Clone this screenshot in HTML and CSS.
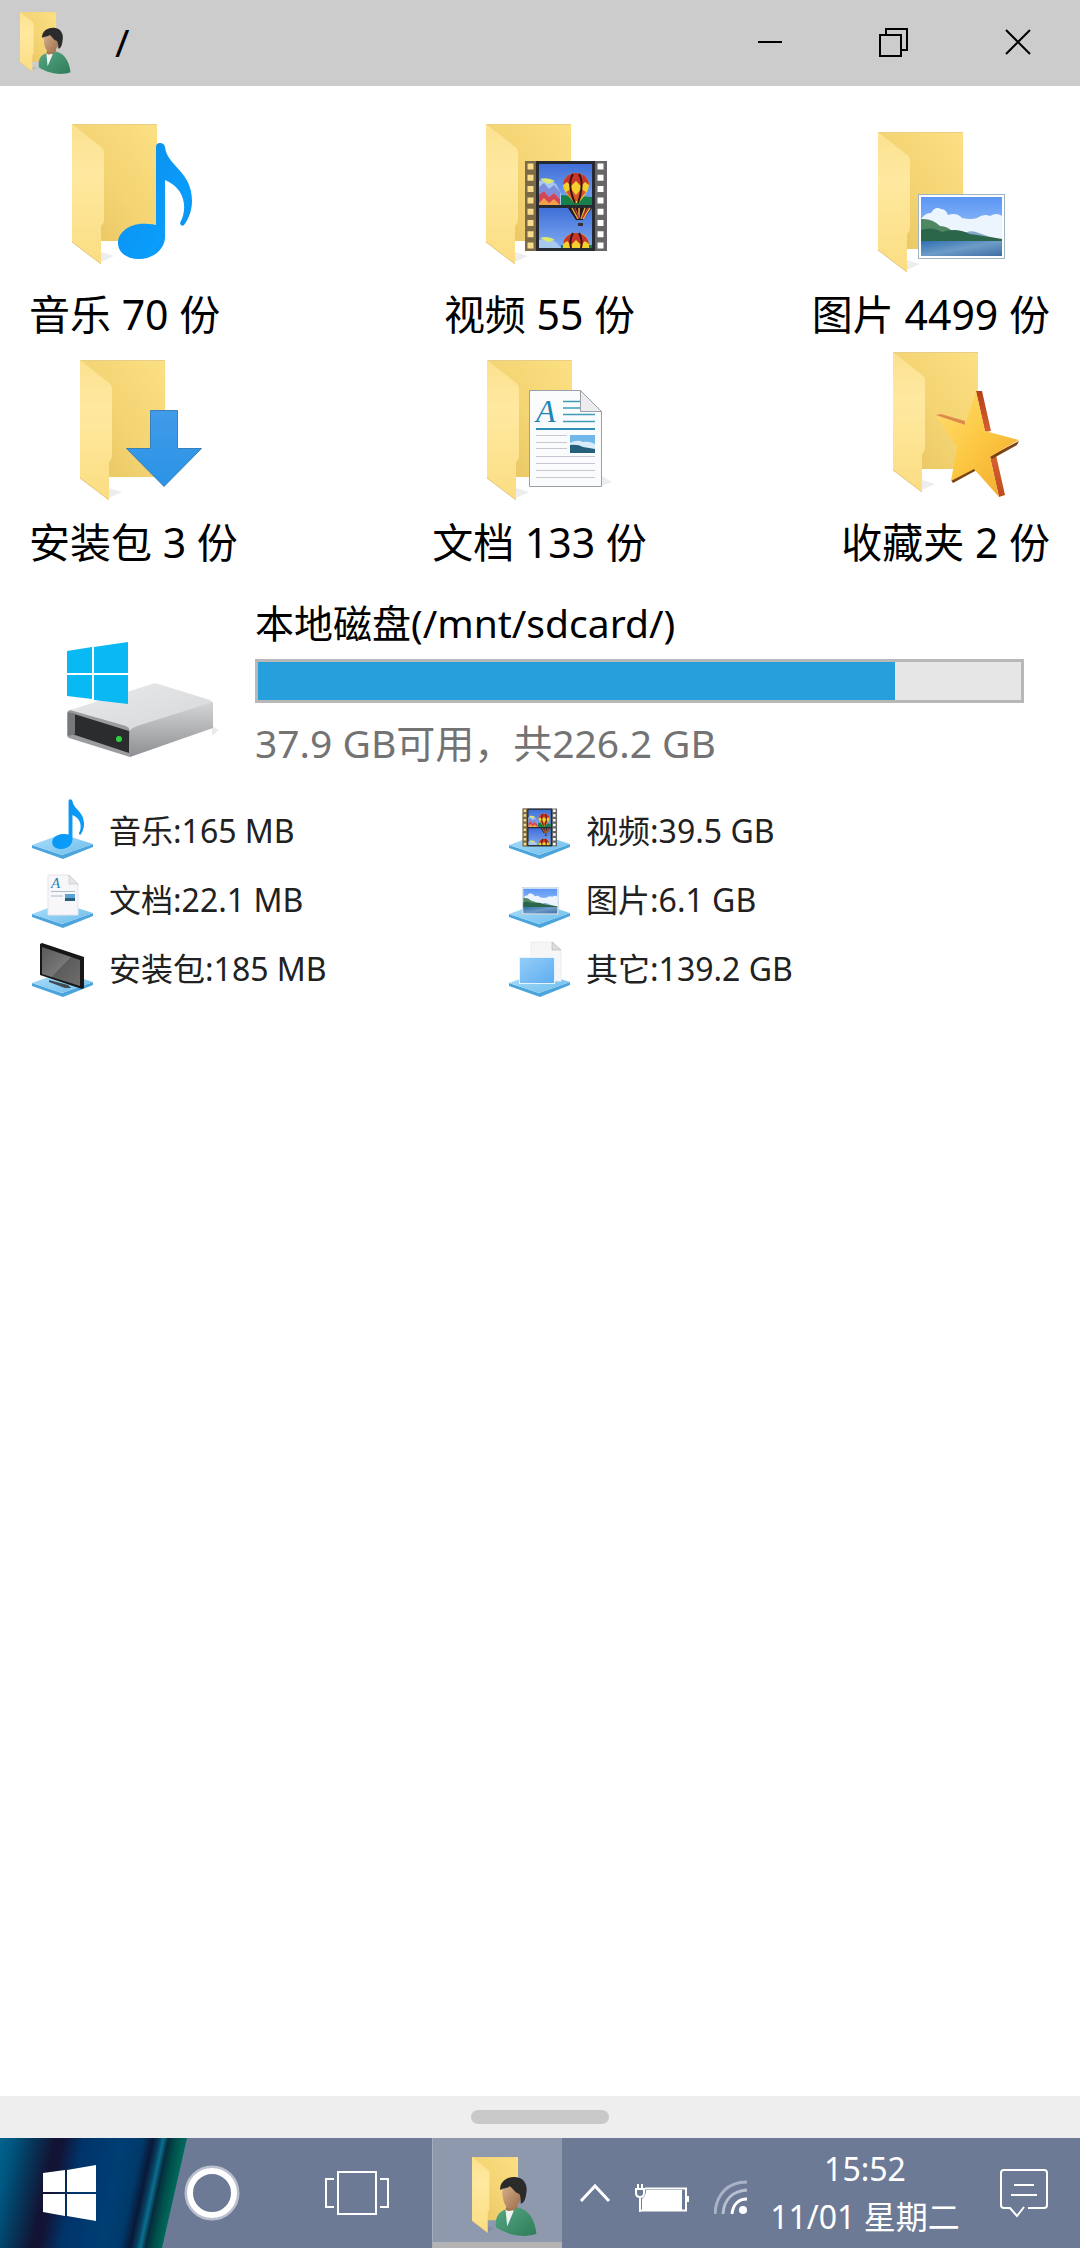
FILE: index.html
```html
<!DOCTYPE html>
<html lang="zh-CN">
<head>
<meta charset="utf-8">
<meta name="viewport" content="width=device-width, initial-scale=1">
<title>文件管理</title>
<link rel="stylesheet" href="styles.css">
</head>
<body>
<svg class="defs" aria-hidden="true">
  <defs>
    <linearGradient id="gBack" x1="0" y1="1" x2="1" y2="0"><stop offset="0" stop-color="#e7c360"/><stop offset=".5" stop-color="#f4d473"/><stop offset="1" stop-color="#fce083"/></linearGradient>
    <linearGradient id="gFlap" x1="0" y1="0" x2="0" y2="1"><stop offset="0" stop-color="#fbe190"/><stop offset=".35" stop-color="#ffe9a0"/><stop offset="1" stop-color="#fbdd82"/></linearGradient>
    <linearGradient id="gNote" x1="0" y1="0" x2="1" y2="1"><stop offset="0" stop-color="#0d8ce8"/><stop offset=".7" stop-color="#0a9dfc"/><stop offset="1" stop-color="#0b84dc"/></linearGradient>
    <linearGradient id="gSky" x1="0" y1="0" x2="0" y2="1"><stop offset="0" stop-color="#3f6fd8"/><stop offset="1" stop-color="#7fa9f2"/></linearGradient>
    <linearGradient id="gPhoto" x1="0" y1="0" x2="0" y2="1"><stop offset="0" stop-color="#5b96f4"/><stop offset="1" stop-color="#b7d8fb"/></linearGradient>
    <linearGradient id="gWater" x1="0" y1="0" x2="1" y2="1"><stop offset="0" stop-color="#2f6fb0"/><stop offset=".5" stop-color="#6d9cc8"/><stop offset="1" stop-color="#3f6fa3"/></linearGradient>
    <linearGradient id="gArrow" x1="0" y1="0" x2="0" y2="1"><stop offset="0" stop-color="#419be9"/><stop offset="1" stop-color="#2a93e6"/></linearGradient>
    <linearGradient id="gStar" x1="0" y1="0" x2="1" y2="1"><stop offset="0" stop-color="#ffe070"/><stop offset=".5" stop-color="#fcc742"/><stop offset="1" stop-color="#f0a72c"/></linearGradient>
    <linearGradient id="gRed" x1="0" y1="0" x2="0" y2="1"><stop offset="0" stop-color="#b8401a"/><stop offset=".5" stop-color="#dc6a35"/><stop offset="1" stop-color="#c04a1c"/></linearGradient>
    <linearGradient id="gTray" x1="0" y1="0" x2="1" y2="1"><stop offset="0" stop-color="#aee0fb"/><stop offset="1" stop-color="#6cbcec"/></linearGradient>
    <linearGradient id="gSide" x1="0" y1="0" x2="0" y2="1"><stop offset="0" stop-color="#d4d5d7"/><stop offset="1" stop-color="#8e8f92"/></linearGradient>
    <linearGradient id="gTop" x1="0" y1="0" x2="1" y2="1"><stop offset="0" stop-color="#e9eaeb"/><stop offset="1" stop-color="#d6d7d9"/></linearGradient>
    <linearGradient id="gCoat" x1="0" y1="0" x2="1" y2="1"><stop offset="0" stop-color="#57a684"/><stop offset="1" stop-color="#2d7d59"/></linearGradient>
    <linearGradient id="gFace" x1="0" y1="0" x2="1" y2="1"><stop offset="0" stop-color="#d8b592"/><stop offset="1" stop-color="#9c6b47"/></linearGradient>
    <linearGradient id="gTv" x1="0" y1="0" x2="1" y2="1"><stop offset="0" stop-color="#5a5a5a"/><stop offset=".5" stop-color="#777"/><stop offset=".52" stop-color="#5c5c5c"/><stop offset="1" stop-color="#6e6e6e"/></linearGradient>
    <linearGradient id="gBlue" x1="0" y1="0" x2="1" y2="1"><stop offset="0" stop-color="#94cdf8"/><stop offset="1" stop-color="#5eaef0"/></linearGradient>

    <symbol id="folder" viewBox="0 0 100 145" overflow="visible">
      <path d="M29 138 L42 132 L29 128Z" fill="#000" opacity=".07"/>
      <path d="M0 0H85V117H28Z" fill="url(#gBack)"/>
      <path d="M0 .5H85" stroke="#e9cf85"/>
      <path d="M0 0 L28 22 Q32 25 32 29 V96 Q32 99 29 102 V140 L0 118Z" fill="url(#gFlap)"/>
      <path d="M0 118 L29 140" stroke="#e3c57a" fill="none"/>
    </symbol>

    <g id="note">
      <path d="M106 23 Q106 19 110 19 Q114 19 115 23 C117 42 142 47 142 77 C142 87 138 96 134 101 Q131 103 130 99 C137 87 137 65 115 56 V114 C114 126 103 135 89 135 C76 135 68 128 68 119 C68 107 82 98 98 100 Q103 100 106 101Z" fill="url(#gNote)"/>
    </g>

    <g id="balloonCell">
      <rect x="75" y="40" width="53" height="41" fill="url(#gSky)"/>
      <path d="M75 81 V74 L96 71 L128 73 V81Z" fill="#17804a"/>
      <path d="M75 57 Q84 54 92 60 L97 70 V81 H75Z" fill="#a9c8ee"/>
      <path d="M76 55 Q84 53 91 57 L84 60Z" fill="#dfe96a"/>
      <path d="M75 63 L80 59 L85 65 L90 61 L96 68 V75 L90 69 L85 73 L80 67 L75 72Z" fill="#7d8fdc"/>
      <path d="M75 71 L80 67 L85 73 L90 69 L96 75 V81 H75Z" fill="#d5455a"/>
      <path d="M75 79 L80 74 L85 79 L90 75 L96 81 H75Z" fill="#f2a04a"/>
      <path d="M112 49 C103 49 99 56 99 61 C99 68 108 75 110 79 H115 C117 75 125 68 125 61 C125 56 121 49 112 49Z" fill="#f4cf2e"/>
      <path d="M99 61 C99 56 103 49 112 49 C121 49 125 56 125 61 L121 58 L117 62 L112 57 L107 62 L103 58Z" fill="#c8352b"/>
      <path d="M102 68 L107 65 L112 71 L117 65 L122 68 L115 77 H109Z" fill="#d9572c"/>
      <path d="M109 50 C104 58 107 70 111 79 M115 50 C120 58 117 70 114 79" stroke="#3a1411" stroke-width="2" fill="none"/>
    </g>

    <g id="film">
      <rect x="61" y="37" width="82" height="90" fill="#666"/>
      <rect x="61" y="37" width="11" height="90" fill="#7b6a45"/>
      <rect x="72" y="37" width="59" height="90" fill="#262a30"/>
      <path d="M66.500 39.500V127" stroke="#f8dc8c" stroke-width="6" stroke-dasharray="6 5.300"/>
      <path d="M136.500 39.500V127" stroke="#fff" stroke-width="6" stroke-dasharray="6 5.300"/>
      <use href="#balloonCell"/>
      <rect x="75" y="84" width="53" height="40" fill="url(#gSky)"/>
      <path d="M104 84 H128 L119 96 H112Z" fill="#24151c"/>
      <path d="M108 84 L114 95 M115 84 V94 M121 84 L117 95 M126 84 L119 95" stroke="#e3b13a" stroke-width="1.500"/>
      <path d="M111 84 L115 94 M124 84 L118 94" stroke="#c33a3a" stroke-width="1.500"/>
      <rect x="114" y="99" width="5" height="3" fill="#333"/>
      <path d="M75 124 V116 Q84 113 92 118 L97 124Z" fill="#a9c8ee"/>
      <path d="M76 114 Q84 111 91 116 L84 118Z" fill="#dfe96a"/>
      <path d="M97 124 H128 V121 H97Z" fill="#17804a"/>
      <path d="M99 124 C98 115 103 109 112 109 C121 109 126 115 125 124Z" fill="#f4cf2e"/>
      <path d="M99 120 C100 113 105 109 112 109 C119 109 124 113 125 120 L121 117 L117 121 L112 116 L107 121 L103 117Z" fill="#c8352b"/>
      <path d="M109 109 Q105 116 107 124 M115 109 Q119 116 117 124" stroke="#3a1411" stroke-width="2" fill="none"/>
    </g>

    <g id="photo">
      <rect x="62.500" y="70.500" width="86" height="64" fill="#fff" stroke="#9fb6c2"/>
      <rect x="65" y="73" width="81" height="59" fill="url(#gPhoto)"/>
      <path d="M65 95 Q70 88 75 89 Q79 82 85 85 Q90 85 92 91 Q101 88 106 94 Q115 96 121 94 Q128 89 134 92 Q141 88 146 92 V117 H65Z" fill="#ecf5fd"/>
      <path d="M104 113 Q112 105 120 108 L140 115 V117 H104Z" fill="#86a9cb"/>
      <path d="M65 95 Q76 94 84 102 Q92 102 98 109 V117 H65Z" fill="#4f8763"/>
      <path d="M65 106 Q76 102 86 108 Q100 103 114 110 Q128 112 146 115 V118 H65Z" fill="#2b654a"/>
      <rect x="65" y="117" width="81" height="15" fill="url(#gWater)"/>
    </g>

    <g id="doc">
      <path d="M137 134 L147 130 L137 124Z" fill="#000" opacity=".07"/>
      <path d="M64.500 38.500 H115.500 L136.500 59.500 V134.500 H64.500Z" fill="#fafbfc" stroke="#9a9fa6"/>
      <path d="M115.500 38.500 V59.500 H136.500Z" fill="#ececf0" stroke="#9a9fa6"/>
      <text class="doc-letter" x="71" y="70">A</text>
      <path d="M98 49.500H115M98 56H115M98 62.500H130M98 69.500H130" stroke="#3f9db5" stroke-width="1.500"/>
      <path d="M71 77H130" stroke="#2e8fb8" stroke-width="2"/>
      <path d="M71 83.500H102M71 90.500H102M71 96.500H102M71 104.500H130M71 111.500H130M71 118.500H130M71 125.500H130" stroke="#c9c6d2"/>
      <rect x="105" y="83" width="25" height="18" fill="#72b7ea"/>
      <path d="M105 91 Q112 87 118 90 Q125 89 130 92 V97 H105Z" fill="#d9ecf8"/>
      <path d="M105 93 Q113 92 118 95 L130 97 V101 H105Z" fill="#24607c"/>
    </g>

    <symbol id="person" viewBox="0 0 120 146">
      <use href="#folder" width="100" height="145"/>
      <path d="M44 126 C43 110 50 101 62 97 L84 93 C104 97 116 115 119 142 C100 149 70 147 44 130Z" fill="url(#gCoat)"/>
      <path d="M62 98 L65 128 L77 100 L71 94Z" fill="#eef4f0"/>
      <path d="M62 97 L66 100 Q78 100 85 92 L84 86 H65Z" fill="#a87750"/>
      <path d="M56 62 C55 50 66 44 78 46 C93 48 95 68 89 80 C85 90 77 96 69 95 C59 92 56 76 56 62Z" fill="url(#gFace)"/>
      <path d="M52 61 C51 44 66 36 80 37 C96 38 104 52 100 68 C99 80 94 87 90 86 C90 78 90 72 87 68 C79 66 76 58 70 54 C65 58 58 57 52 61Z" fill="#2b2b2c"/>
    </symbol>

    <g id="base">
      <path d="M0 47 L30 57 L61 46 V49 L31 61 L0 50Z" fill="#4ba5dc"/>
      <path d="M0 47 L30 36 L61 46 L30 57Z" fill="url(#gTray)"/>
    </g>
  </defs>
</svg>

<div class="window">
  <header class="titlebar">
    <svg class="titlebar-icon" viewBox="0 0 120 146" aria-hidden="true"><use href="#person"/></svg>
    <h1 class="path">/</h1>
    <div class="window-controls">
      <button type="button" aria-label="最小化"><svg width="30" height="30" viewBox="0 0 30 30"><path d="M3 14H27" stroke="#000" stroke-width="2"/></svg></button>
      <button type="button" aria-label="还原"><svg width="30" height="30" viewBox="0 0 30 30"><path d="M1 7H22V28H1ZM7 7V1H28V22H22" stroke="#000" stroke-width="2" fill="none"/></svg></button>
      <button type="button" aria-label="关闭"><svg width="30" height="30" viewBox="0 0 30 30"><path d="M3 2L27 26M27 2L3 26" stroke="#000" stroke-width="2"/></svg></button>
    </div>
  </header>

  <main class="content">
    <nav class="tiles">
      <button type="button" class="tile">
        <svg width="150" height="160" viewBox="0 0 150 160" aria-hidden="true"><use href="#folder" x="22" y="0" width="100" height="145"/><use href="#note"/></svg>
        <span>音乐 70 份</span>
      </button>
      <button type="button" class="tile">
        <svg width="150" height="160" viewBox="0 0 150 160" aria-hidden="true"><use href="#folder" x="22" y="0" width="100" height="145"/><use href="#film"/></svg>
        <span>视频 55 份</span>
      </button>
      <button type="button" class="tile">
        <svg width="150" height="160" viewBox="0 0 150 160" aria-hidden="true"><use href="#folder" x="22" y="8" width="100" height="145"/><use href="#photo"/></svg>
        <span>图片 4499 份</span>
      </button>
      <button type="button" class="tile">
        <svg width="150" height="160" viewBox="0 0 150 160" aria-hidden="true"><use href="#folder" x="22" y="8" width="100" height="145"/><path d="M92.500 58.500H119.500V96.500H143.500L106 134.500L68.500 96.500H92.500Z" fill="url(#gArrow)" stroke="#3a7fb8"/></svg>
        <span>安装包 3 份</span>
      </button>
      <button type="button" class="tile">
        <svg width="150" height="160" viewBox="0 0 150 160" aria-hidden="true"><use href="#folder" x="22" y="8" width="100" height="145"/><use href="#doc"/></svg>
        <span>文档 133 份</span>
      </button>
      <button type="button" class="tile">
        <svg width="150" height="160" viewBox="0 0 150 160" aria-hidden="true"><use href="#folder" x="22" y="0" width="100" height="145"/>
          <path d="M105 39 L111 39 L120 79 L114 80Z M119 105 L125 103 L134 143 L128 145Z" fill="url(#gRed)"/>
          <path d="M65 63 L70 62 L94 69 L94 73Z" fill="#dd8a4a"/>
          <path d="M148 89 L146 93 L121 107 L119 104Z M104 116 L104 119 L82 131 L80 128Z" fill="#7a4416"/>
          <path d="M105 39 L114 79 L148 88 L119 105 L128 145 L103 117 L80 129 L86 95 L65 64 L94 73Z" fill="url(#gStar)"/>
        </svg>
        <span>收藏夹 2 份</span>
      </button>
    </nav>

    <section class="disk">
      <svg class="disk-icon" width="152" height="120" viewBox="0 0 152 120" aria-hidden="true">
        <path d="M145 84 L152 88 L145 94Z" fill="#000" opacity=".08"/>
        <path d="M0 69 L88 41 L143 58 Q146 60 146 62 L64 88Z" fill="url(#gTop)"/>
        <path d="M62 90 Q64 86 70 84 L146 60 V86 L63 115Z" fill="url(#gSide)"/>
        <path d="M0 72 Q0 69 3 68 L59 84 Q63 86 63 90 V115 L2 96 Q0 95 0 93Z" fill="#9b9ca0"/>
        <path d="M4 71 L62 89 V111 L8 93 Q5 92 5 89Z" fill="#2b2c2e"/>
        <path d="M1 70 L8 72 V92 L1 94Z" fill="#77787b"/>
        <circle cx="52" cy="97" r="3" fill="#2ed23e"/>
        <path d="M0 9L25 5V31H0ZM27 5L61 0V31H27ZM0 33H25V57L0 54ZM27 33H61V62L27 58Z" fill="#08b9f4"/>
      </svg>
      <div class="disk-info">
        <label class="disk-name" for="usage">本地磁盘(/mnt/sdcard/)</label>
        <progress id="usage" class="usage" max="1000" value="835"></progress>
        <p class="disk-free">37.9 GB可用，共226.2 GB</p>
      </div>
    </section>

    <ul class="breakdown">
      <li><svg width="61" height="62" viewBox="0 0 61 62" aria-hidden="true"><use href="#base"/><use href="#note" transform="translate(-9 -7) scale(.43)"/></svg>音乐:165 MB</li>
      <li><svg width="61" height="62" viewBox="0 0 61 62" aria-hidden="true"><use href="#base"/><use href="#film" transform="translate(-12 -5) scale(.42)"/></svg>视频:39.5 GB</li>
      <li><svg width="61" height="62" viewBox="0 0 61 62" aria-hidden="true"><use href="#base"/>
        <path d="M16 8 H37 L46 17 V48 H16Z" fill="#f7f7fa" stroke="#e4e4ea"/><path d="M37 8 V17 H46Z" fill="#e6e6ea" stroke="#b9b9bf" stroke-width=".500"/>
        <text class="doc-letter doc-letter-small" x="19" y="21">A</text>
        <path d="M19 24.500H43M19 29H31" stroke="#a9bcc9"/><rect x="33" y="27" width="10" height="7" fill="#5ba3d6"/><rect x="33" y="31" width="10" height="3" fill="#24607c"/></svg>文档:22.1 MB</li>
      <li><svg width="61" height="62" viewBox="0 0 61 62" aria-hidden="true"><use href="#base"/><use href="#photo" transform="translate(-13 -9) scale(.42)"/></svg>图片:6.1 GB</li>
      <li><svg width="61" height="62" viewBox="0 0 61 62" aria-hidden="true"><use href="#base"/><path d="M17 44 L36 49 L39 52 L33 52 L17 46Z" fill="#3f4a52"/><path d="M8 8 L10 7 L52 21 V52 L50 53 L8 39Z" fill="#171717"/><path d="M10 11 L48 24 V50 L10 38Z" fill="url(#gTv)"/></svg>安装包:185 MB</li>
      <li><svg width="61" height="62" viewBox="0 0 61 62" aria-hidden="true"><use href="#base"/><path d="M22 6 H44 L52 14 V45 H22Z" fill="#f6f6f7" stroke="#ececee"/><path d="M43 6 V14 H52Z" fill="#dcdcde" stroke="#aaa" stroke-width=".500"/><rect x="10.500" y="21.500" width="35" height="26" fill="url(#gBlue)" stroke="#e4f3fd"/></svg>其它:139.2 GB</li>
    </ul>
  </main>

  <div class="handle-bar"><div class="handle"></div></div>

  <footer class="taskbar">
    <button type="button" class="start" aria-label="开始">
      <svg width="53" height="56" viewBox="0 0 53 56"><path d="M0 8L22 5V27H0ZM24 5L53 0V27H24ZM0 29H22V51L0 47ZM24 29H53V56L24 51Z" fill="#fff"/></svg>
    </button>
    <button type="button" class="search" aria-label="搜索">
      <svg width="56" height="56" viewBox="0 0 56 56"><circle cx="28" cy="28" r="26" fill="none" stroke="#b9bfcd" stroke-width="3"/><circle cx="28" cy="28" r="22" fill="none" stroke="#fff" stroke-width="6"/></svg>
    </button>
    <button type="button" class="task-view" aria-label="任务视图">
      <svg width="66" height="44" viewBox="0 0 66 44" fill="none" stroke="#fff" stroke-width="2"><path d="M14 1H52V43H14Z"/><path d="M10 8H2V36H10M56 8H64V36H56"/></svg>
    </button>
    <button type="button" class="active-app" aria-label="文件管理">
      <svg width="65" height="79" viewBox="0 0 120 146"><use href="#person"/></svg>
    </button>
    <div class="tray">
      <button type="button" class="expand" aria-label="显示更多"><svg width="32" height="20" viewBox="0 0 32 20"><path d="M2 18L16 3L30 18" fill="none" stroke="#fff" stroke-width="3"/></svg></button>
      <svg class="battery" width="54" height="28" viewBox="0 0 54 28" aria-hidden="true">
        <path d="M10 4.500H51V26.500H6" fill="none" stroke="#fff" stroke-width="2"/><path d="M11 6H47V26H7V15Q11 12 11 6Z" fill="#fff"/><rect x="51" y="12" width="3" height="6" fill="#fff"/>
        <path d="M3 0V5M7 0V5M1 5H9V9Q9 13 5 13Q1 13 1 9ZM5 13V28" stroke="#fff" stroke-width="2" fill="none"/>
      </svg>
      <svg class="wifi" width="34" height="34" viewBox="0 0 34 34" fill="none" stroke-width="3" aria-hidden="true">
        <path d="M1 34C2 14 14 2 33 2" stroke="#aab2c6"/><path d="M9 34C10 19 19 11 33 10" stroke="#b8c0d0"/><path d="M18 34C19 24 25 19 33 19" stroke="#fff"/><circle cx="29" cy="30" r="4" fill="#fff"/>
      </svg>
      <div class="clock"><time>15:52</time><time>11/01 星期二</time></div>
      <button type="button" class="notices" aria-label="通知">
        <svg width="48" height="50" viewBox="0 0 48 50" fill="none" stroke="#fff" stroke-width="2"><path d="M28 40H44Q47 40 47 37V5Q47 2 44 2H4Q1 2 1 5V37Q1 40 4 40H10L17 48L24 39"/><path d="M14 17H34M11 27H37"/></svg>
      </button>
    </div>
  </footer>
</div>
</body>
</html>
```
FILE: styles.css
```css
* {
  box-sizing: border-box;
}

body {
  margin: 0;
  background: #fff;
  color: #000;
  font-family: "Noto Sans", "Noto Sans CJK SC", sans-serif;
}

button {
  margin: 0;
  padding: 0;
  border: 0;
  background: none;
  color: inherit;
  font: inherit;
}

svg {
  display: block;
  flex: none;
}

.defs {
  position: absolute;
  width: 0;
  height: 0;
}

.doc-letter {
  fill: #1f86b4;
  font: italic 32px "Liberation Serif", serif;
}

.doc-letter-small {
  font-size: 15px;
}

.window {
  display: flex;
  flex-direction: column;
  min-height: 100vh;
}

/* Title bar */
.titlebar {
  display: flex;
  align-items: center;
  height: 86px;
  padding-left: 20px;
  background: #ccc;
}

.titlebar-icon {
  width: 51px;
  height: 62px;
}

.path {
  flex: 1;
  margin: 0;
  padding: 0 0 4px 44px;
  font-size: 39px;
  font-weight: 400;
}

.window-controls {
  display: flex;
  height: 100%;
}

.window-controls button {
  display: grid;
  place-items: center;
  width: 124px;
}

/* Folder tiles */
.content {
  flex: 1;
  padding-top: 38px;
}

.tiles {
  display: grid;
  grid-template-columns: 1fr auto 1fr;
  row-gap: 8px;
  padding: 0 30px 0 29px;
  font-size: 41px;
  line-height: 60px;
}

.tile {
  display: flex;
  flex-direction: column;
  align-items: center;
  justify-self: center;
  white-space: nowrap;
}

.tile:nth-child(3n + 1) {
  justify-self: start;
}

.tile:nth-child(3n) {
  justify-self: end;
}

/* Disk usage */
.disk {
  display: flex;
  align-items: flex-end;
  gap: 36px;
  margin-top: 24px;
  padding: 0 56px 0 67px;
  font-size: 39px;
  line-height: 54px;
}

.disk-icon {
  margin-bottom: 8px;
}

.disk-info {
  flex: 1;
}

.disk-name {
  display: block;
}

.disk-free {
  margin: 13px 0 0;
  color: #737373;
}

.usage {
  display: block;
  width: 100%;
  height: 44px;
  margin-top: 9px;
  border: 3px solid #b8b8b8;
  background: #e6e6e6;
  appearance: none;
}

.usage::-webkit-progress-bar {
  background: #e6e6e6;
}

.usage::-webkit-progress-value {
  background: #269fdc;
}

.breakdown {
  display: grid;
  grid-template-columns: 477px 1fr;
  grid-auto-rows: 69px;
  margin: 24px 0 0;
  padding: 0 32px;
  color: #212121;
  font-size: 32px;
  list-style: none;
}

.breakdown li {
  display: flex;
  align-items: center;
  gap: 16px;
}

/* Gesture handle */
.handle-bar {
  display: grid;
  place-items: center;
  height: 42px;
  background: #eee;
}

.handle {
  width: 138px;
  height: 14px;
  border-radius: 7px;
  background: #c9c9c9;
}

/* Taskbar */
.taskbar {
  display: flex;
  height: 110px;
  background: #6d7a95;
  color: #fff;
}

.taskbar button {
  display: grid;
  place-items: center;
}

.taskbar .start {
  place-items: center start;
  width: 187px;
  margin-right: -45px;
  padding-left: 43px;
  background: linear-gradient(102deg, #00648c 0, #00557f 14px, #063457 34px, #131333 54px, #121436 62px, #00346a 82px, #003e74 120px, #003a6a 140px, #0a1838 150px, #07405f 156px, #0b6f90 160px, #062b3c 165px, #00504c 173px, #006a5c 182px);
  clip-path: polygon(0 0, 100% 0, 162px 100%, 0 100%);
}

.search {
  width: 140px;
}

.task-view {
  width: 150px;
}

.taskbar .active-app {
  width: 130px;
  border-bottom: 6px solid #b4b4b4;
  border-left: 1px solid #a4adbe;
  background: #8e99ae;
  padding: 12px 0 0 14px;
}

.tray {
  display: flex;
  flex: 1;
  align-items: center;
  padding-right: 32px;
}

.expand {
  width: 66px;
}

.battery {
  margin: 10px 25px 0 7px;
}

.wifi {
  margin-top: 8px;
}

.clock {
  display: flex;
  flex: 1;
  flex-direction: column;
  align-items: center;
  margin-right: 18px;
  font-size: 32px;
  line-height: 48px;
  white-space: nowrap;
}
```
